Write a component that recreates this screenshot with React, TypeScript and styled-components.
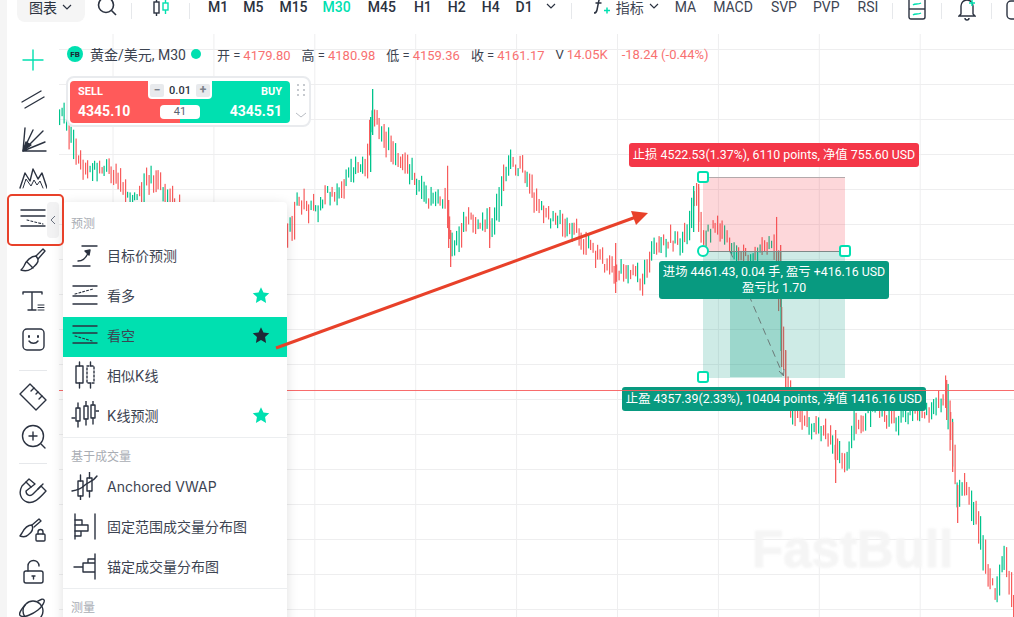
import * as React from 'react';
import styled, { createGlobalStyle } from 'styled-components';

const FONT = `Roboto, "Noto Sans CJK SC", sans-serif`;
const ACCENT = '#00e0b0';
const INK = '#2b3240';
const UP = '#00c48c';
const DOWN = '#f75c5c';

const Global = createGlobalStyle`
  html, body { margin: 0; padding: 0; background: #fff; }
  body { font-family: ${FONT}; color: ${INK}; }
`;

const Page = styled.div`
  position: relative;
  display: flex;
  width: 1014px;
  height: 617px;
  overflow: hidden;
  background: #fff;
`;
const Strip = styled.div`
  width: 7px;
  flex: none;
  background: #f5f5f5;
`;
const Main = styled.div`
  flex: 1;
  display: flex;
  flex-direction: column;
  min-width: 0;
`;
const TopBar = styled.div`
  height: 34px;
  flex: none;
`;
const TopRow = styled.div`
  display: flex;
  align-items: center;
  height: 32px;
  margin-top: -10px;
  padding-left: 10px;
  white-space: nowrap;
`;
const ChartBtn = styled.div`
  width: 68px;
  height: 32px;
  flex: none;
  box-sizing: border-box;
  padding: 2px 0 0 12px;
  display: flex;
  align-items: center;
  gap: 5px;
  background: #f5f5f5;
  border-radius: 8px;
  font-size: 14px;
`;
const TopDivider = styled.div<{ $ml: number }>`
  width: 1px;
  height: 16px;
  flex: none;
  margin: 10px 0 0 ${(p) => p.$ml}px;
  background: #e6e8eb;
`;
const TopIcon = styled.svg<{ $ml: number; $mt?: number }>`
  flex: none;
  margin-left: ${(p) => p.$ml}px;
  margin-top: ${(p) => p.$mt ?? 0}px;
`;
const Period = styled.span<{ $ml: number; $on?: boolean; $light?: boolean }>`
  flex: none;
  margin-left: ${(p) => p.$ml}px;
  padding-top: 2px;
  font-size: 14px;
  font-weight: ${(p) => (p.$light ? 400 : 500)};
  color: ${(p) => (p.$on ? ACCENT : p.$light ? '#3d4452' : INK)};
`;
const Body = styled.div`
  flex: 1;
  display: flex;
  min-height: 0;
`;
const ToolBar = styled.div`
  width: 52px;
  flex: none;
  padding-top: 7px;
  display: flex;
  flex-direction: column;
`;
const ToolSlot = styled.div<{ $h: number }>`
  height: ${(p) => p.$h}px;
  flex: none;
  display: flex;
  align-items: center;
  justify-content: center;
`;
const ToolLine = styled.div`
  width: 28px;
  height: 1px;
  background: #e6e8eb;
`;
const ChartArea = styled.div`
  flex: 1;
  min-width: 0;
  position: relative;
`;
const ChartSvg = styled.svg`
  display: block;
  width: 955px;
  height: 583px;
`;

/* things floating over the chart, in page coordinates */
const Legend = styled.div`
  position: absolute;
  left: 67px;
  top: 45px;
  height: 18px;
  display: flex;
  align-items: center;
  font-size: 13px;
  white-space: nowrap;
  color: #3c4350;
`;
const Badge = styled.div`
  width: 16px;
  height: 16px;
  border-radius: 50%;
  background: ${ACCENT};
  color: #1d2430;
  font-size: 8px;
  font-weight: 700;
  display: flex;
  align-items: center;
  justify-content: center;
`;
const Symbol = styled.span`
  margin-left: 7px;
  font-size: 14px;
`;
const Dot = styled.span`
  width: 10px;
  height: 10px;
  margin: 0 5px 0 5px;
  border-radius: 50%;
  background: ${ACCENT};
`;
const Key = styled.span`
  margin-left: 11px;
  &:first-of-type { margin-left: 0; }
`;
const Val = styled.span`
  color: #f87171;
  margin-left: 3px;
`;
const TradeBox = styled.div`
  position: absolute;
  left: 66px;
  top: 76px;
  width: 245px;
  height: 51px;
  box-sizing: border-box;
  padding: 3px 19px 2px 2px;
  background: #fff;
  border: 2px solid #e9ebee;
  border-radius: 8px;
`;
const TradeInner = styled.div`
  position: relative;
  display: flex;
  height: 42px;
  border-radius: 4px;
  overflow: hidden;
  color: #fff;
  font-weight: 700;
`;
const Side = styled.div<{ $buy?: boolean }>`
  flex: 1;
  display: flex;
  flex-direction: column;
  box-sizing: border-box;
  padding: 3px 8px;
  background: ${(p) => (p.$buy ? ACCENT : '#ff5a5a')};
  align-items: ${(p) => (p.$buy ? 'flex-end' : 'flex-start')};
`;
const SideName = styled.span`
  font-size: 11px;
  line-height: 15px;
`;
const SidePrice = styled.span`
  margin-top: 2px;
  font-size: 14px;
  line-height: 20px;
`;
const Stepper = styled.div`
  position: absolute;
  left: 78px;
  top: 0;
  width: 64px;
  height: 18px;
  box-sizing: border-box;
  padding: 2px;
  display: flex;
  align-items: center;
  justify-content: space-between;
  background: #fff;
  border-radius: 0 0 4px 4px;
  color: #2b3240;
  font-size: 11px;
  font-weight: 500;
`;
const StepBtn = styled.span`
  width: 14px;
  height: 13px;
  background: #e8eaed;
  border-radius: 2px;
  color: #7b818b;
  font-size: 12px;
  font-weight: 700;
  line-height: 13px;
  text-align: center;
`;
const SpreadBox = styled.div`
  position: absolute;
  left: 90px;
  top: 24px;
  width: 40px;
  height: 14px;
  background: #fff;
  border-radius: 4px;
  color: #5b6270;
  font-size: 11px;
  font-weight: 400;
  line-height: 14px;
  text-align: center;
`;
const TradeSide = styled.svg`
  position: absolute;
  right: 2px;
  top: 5px;
`;
const Tag = styled.div<{ $x: number; $y: number; $w: number; $h: number; $bg: string }>`
  position: absolute;
  left: ${(p) => p.$x}px;
  top: ${(p) => p.$y}px;
  width: ${(p) => p.$w}px;
  height: ${(p) => p.$h}px;
  display: flex;
  flex-direction: column;
  align-items: center;
  justify-content: center;
  background: ${(p) => p.$bg};
  border-radius: 3px;
  color: #fff;
  font-size: 12.35px;
  line-height: 16px;
  white-space: nowrap;
`;
const PriceLine = styled.div`
  position: absolute;
  left: 59px;
  right: 0;
  top: 390px;
  height: 1px;
  background: rgba(247, 92, 92, 0.9);
`;
const Handle = styled.div<{ $x: number; $y: number; $round?: boolean }>`
  position: absolute;
  left: ${(p) => p.$x - 6}px;
  top: ${(p) => p.$y - 6}px;
  width: 12px;
  height: 12px;
  box-sizing: border-box;
  background: #fff;
  border: 2px solid ${ACCENT};
  border-radius: ${(p) => (p.$round ? '50%' : '3px')};
`;
const Watermark = styled.div`
  position: absolute;
  left: 752px;
  top: 523px;
  font-family: "Liberation Sans", sans-serif;
  font-size: 51px;
  font-weight: 700;
  line-height: 54px;
  color: #f5f5f5;
  -webkit-text-stroke: 1px #f5f5f5;
  filter: blur(1px);
`;
const Menu = styled.div`
  position: absolute;
  left: 63px;
  top: 202px;
  width: 224px;
  height: 430px;
  background: #fff;
  border-radius: 4px;
  box-shadow: 0 2px 12px rgba(0, 0, 0, 0.13);
`;
const MenuTitle = styled.div<{ $h: number; $pt: number }>`
  height: ${(p) => p.$h}px;
  box-sizing: border-box;
  padding: ${(p) => p.$pt}px 8px 0;
  display: flex;
  align-items: center;
  font-size: 12px;
  color: #a9adb4;
`;
const MenuRow = styled.div<{ $on?: boolean }>`
  height: 40px;
  box-sizing: border-box;
  padding: 0 17px 4px 8px;
  display: flex;
  align-items: center;
  gap: 8px;
  background: ${(p) => (p.$on ? ACCENT : 'transparent')};
  color: #3d4452;
  font-family: Inter, "Noto Sans CJK SC", sans-serif;
  font-size: 14px;
`;
const RowLabel = styled.span`
  flex: 1;
`;
const MenuSep = styled.div`
  height: 1px;
  background: #eceef0;
`;
const ActiveTab = styled.div`
  position: absolute;
  left: 47px;
  top: 202px;
  width: 12px;
  height: 36px;
  display: flex;
  align-items: center;
  justify-content: center;
  background: #f2f2f3;
  border-radius: 4px;
`;
const RedBox = styled.div`
  position: absolute;
  left: 7px;
  top: 194px;
  width: 57px;
  height: 52px;
  box-sizing: border-box;
  border: 2px solid #e8412a;
  border-radius: 5px;
`;
const ArrowLayer = styled.svg`
  position: absolute;
  left: 0;
  top: 0;
  pointer-events: none;
`;

/* price outline read off the picture, bars are scattered around it */
const OUTLINE: [number, number][] = [
  [59, 122], [63, 115], [68, 133], [72, 143], [77, 160], [90, 170], [110, 170], [118, 183], [127, 197], [143, 195],
  [146, 177], [153, 182], [170, 197], [200, 240], [285, 240], [293, 223], [296, 197], [307, 207], [317, 208], [323, 197],
  [333, 193], [347, 180], [357, 167], [367, 163], [372, 120], [380, 127], [390, 147], [397, 163], [403, 160], [410, 173],
  [420, 187], [430, 203], [440, 197], [447, 203], [450, 247], [457, 237], [465, 220], [477, 223], [487, 223], [492, 227],
  [498, 203], [503, 180], [510, 163], [523, 168], [530, 183], [537, 207], [550, 220], [560, 218], [567, 227], [577, 230],
  [583, 240], [593, 253], [603, 263], [617, 273], [627, 273], [642, 280], [653, 253], [667, 240], [680, 243], [688, 230],
  [693, 197], [698, 203], [702, 233], [713, 230], [727, 237], [737, 253], [750, 262], [760, 247], [775, 243], [780, 300],
  [782, 340], [785, 370], [790, 397], [793, 413], [803, 423], [823, 430], [830, 437], [837, 450], [847, 460], [855, 423],
  [873, 410], [897, 420], [913, 407], [927, 413], [940, 400], [946, 395], [950, 430], [955, 477], [958, 497], [963, 483],
  [970, 497], [977, 520], [983, 553], [990, 587], [997, 590], [1003, 557], [1010, 583], [1014, 607],
];
const SPIKES: [number, number, number, string][] = [
  [372, 89, 135, UP], [370, 117, 172, UP], [448, 200, 248, DOWN], [450, 230, 267, DOWN], [489, 207, 248, DOWN],
  [615, 243, 293, DOWN], [780, 245, 307, DOWN], [781, 307, 367, DOWN], [785, 350, 395, DOWN], [835, 430, 483, DOWN],
  [946, 380, 420, DOWN], [950, 412, 440, DOWN], [952, 422, 472, DOWN], [957, 485, 523, DOWN], [693, 186, 232, UP], [698, 184, 222, DOWN],
];

const priceAt = (x: number) => {
  for (let i = 1; i < OUTLINE.length; i++) {
    const [x1, y1] = OUTLINE[i];
    if (x <= x1) {
      const [x0, y0] = OUTLINE[i - 1];
      return y0 + ((y1 - y0) * (x - x0)) / (x1 - x0);
    }
  }
  return 607;
};

const makeBars = () => {
  let seed = 20240;
  const rnd = () => {
    seed = (seed * 16807) % 2147483647;
    return seed / 2147483647;
  };
  const bars: { x: number; y: number; h: number; c: string }[] = [];
  for (let x = 59; x < 1014; x += 2.35) {
    const slope = priceAt(x + 2.35) - priceAt(x);
    const mid = priceAt(x) + (rnd() - 0.5) * 14;
    const h = 5 + rnd() * 14 + Math.abs(slope) * 1.5;
    const falling = slope > 0 ? rnd() < 0.78 : rnd() < 0.3;
    bars.push({ x: Math.round(x * 2) / 2, y: mid - h / 2, h, c: falling ? DOWN : UP });
  }
  return bars;
};

const HLINES = Array.from({ length: 17 }, (_, i) => 49 + i * 35);
const VLINES = Array.from({ length: 9 }, (_, i) => 113 + i * 100.9);

const Chart = () => {
  const bars = React.useMemo(makeBars, []);
  return (
    <ChartSvg viewBox="59 34 955 583">
      {HLINES.map((y) => (
        <line key={y} x1={59} x2={1014} y1={y + 0.5} y2={y + 0.5} stroke="#eeeeef" />
      ))}
      {VLINES.map((x) => (
        <line key={x} x1={x} x2={x} y1={34} y2={617} stroke="#eeeeef" />
      ))}
      {bars.map((b) => (
        <rect key={b.x} x={b.x} y={b.y} width={1.2} height={b.h} fill={b.c} />
      ))}
      {SPIKES.map(([x, y1, y2, c]) => (
        <rect key={`${x}-${y1}`} x={x} y={y1} width={1.3} height={y2 - y1} fill={c} />
      ))}
      <rect x={703} y={177} width={142} height={74} fill="rgba(244,56,72,0.2)" />
      <rect x={703} y={251} width={142} height={127} fill="rgba(8,154,128,0.2)" />
      <rect x={730} y={251} width={52} height={126} fill="rgba(8,154,128,0.25)" />
      <line x1={703} x2={845} y1={177.5} y2={177.5} stroke="#b3a9ab" />
      <line x1={703} x2={845} y1={251.5} y2={251.5} stroke="#7d8a88" />
      <path d="M730 251 L783 375" stroke="#6b7a78" strokeDasharray="7 5" fill="none" />
      <path d="M779 371 L783.5 376 L784 369" stroke="#6b7a78" fill="none" />
    </ChartSvg>
  );
};

const Ico: React.FC<{ box: string; size?: number; children: React.ReactNode }> = ({ box, size = 28, children }) => (
  <svg width={size} height={size} viewBox={box} fill="none" stroke={INK} strokeWidth={1.4} strokeLinecap="round" strokeLinejoin="round" style={{ flex: 'none' }}>
    {children}
  </svg>
);

const Star: React.FC<{ dark?: boolean }> = ({ dark }) => (
  <svg width={18} height={18} viewBox="0 0 24 24" fill={dark ? '#1f2836' : ACCENT}>
    <path d="M12 1.500l3.300 7 7.700 1-5.600 5.300 1.400 7.700-6.800-3.700-6.800 3.700 1.400-7.700L1 9.500l7.700-1z" />
  </svg>
);

const Chevron: React.FC<{ c?: string }> = ({ c = INK }) => (
  <svg width={10} height={10} viewBox="0 0 10 10" fill="none" stroke={c} strokeWidth={1.2}>
    <path d="M1 3l4 4 4-4" />
  </svg>
);

const PERIODS: [string, number, boolean?][] = [
  ['M1', 18], ['M5', 15], ['M15', 16], ['M30', 15, true], ['M45', 17], ['H1', 18], ['H2', 16], ['H4', 16], ['D1', 16],
];
const STUDIES: [string, number][] = [['MA', 16], ['MACD', 17], ['SVP', 18], ['PVP', 16], ['RSI', 18]];

const Top = () => (
  <TopBar>
    <TopRow>
      <ChartBtn>
        图表
        <Chevron />
      </ChartBtn>
      <TopIcon $ml={11} width={22} height={22} viewBox="0 0 22 22" fill="none" stroke={INK} strokeWidth={1.6}>
        <circle cx="10" cy="10" r="7.500" />
        <path d="M15.500 15.500l4.500 4.500" />
      </TopIcon>
      <TopDivider $ml={13} />
      <TopIcon $ml={21} $mt={4} width={16} height={18} viewBox="0 0 16 18" fill="none" stroke={INK} strokeWidth={1.4}>
        <rect x="1" y="3" width="5" height="11" />
        <path d="M3.500 0v3M3.500 14v3" />
        <g stroke={ACCENT}>
          <rect x="10" y="4" width="5" height="7" />
          <path d="M12.500 0v4M12.500 11v4" />
        </g>
      </TopIcon>
      <TopDivider $ml={20} />
      {PERIODS.map(([t, ml, on]) => (
        <Period key={t} $ml={ml} $on={on}>{t}</Period>
      ))}
      <TopIcon $ml={13} width={10} height={10} viewBox="0 0 10 10" fill="none" stroke={INK} strokeWidth={1.2}>
        <path d="M1 3l4 4 4-4" />
      </TopIcon>
      <TopDivider $ml={15} />
      <TopIcon $ml={21} width={17} height={20} viewBox="0 0 17 20" fill="none" stroke={INK} strokeWidth={1.5}>
        <path d="M10 2C7 1.500 6 3 5.600 6L4 14c-.4 2-1.200 3-3 3M2.500 7h6" />
        <path d="M11 14.500h6M14 11.500v6" stroke={ACCENT} />
      </TopIcon>
      <Period $ml={6} $light>指标</Period>
      <TopIcon $ml={5} width={10} height={10} viewBox="0 0 10 10" fill="none" stroke={INK} strokeWidth={1.2}>
        <path d="M1 3l4 4 4-4" />
      </TopIcon>
      {STUDIES.map(([t, ml]) => (
        <Period key={t} $ml={ml} $light>{t}</Period>
      ))}
      <TopDivider $ml={14} />
      <TopIcon $ml={15} $mt={4} width={18} height={26} viewBox="0 0 18 26" fill="none" stroke={INK} strokeWidth={1.4}>
        <rect x="1" y="1" width="16" height="23" rx="2" />
        <path d="M1 14h16" />
        <path d="M5 10c2-2 5 0 8-2M5 20c2-2 5 0 8-2" stroke={ACCENT} />
      </TopIcon>
      <TopDivider $ml={15} />
      <TopIcon $ml={16} $mt={4} width={18} height={26} viewBox="0 0 18 26" fill="none" stroke={INK} strokeWidth={1.4}>
        <path d="M3 19V11a6 6 0 0112 0v8l2 2H1zM7 23a2 2 0 004 0" />
        <path d="M11 8h6M14 5v6" stroke={ACCENT} />
      </TopIcon>
      <TopDivider $ml={15} />
      <TopIcon $ml={14} $mt={4} width={16} height={26} viewBox="0 0 16 26" fill="none" stroke={INK} strokeWidth={1.4}>
        <rect x="1" y="6" width="20" height="18" rx="4" />
      </TopIcon>
    </TopRow>
  </TopBar>
);

const Tools = () => (
  <ToolBar>
    <ToolSlot $h={38}>
      <Ico box="19 46 28 28"><path d="M33 50v20M23 60h20" stroke={ACCENT} /></Ico>
    </ToolSlot>
    <ToolSlot $h={38}>
      <Ico box="19 84 28 28"><path d="M22 102l19-11M25 108l19-11" /></Ico>
    </ToolSlot>
    <ToolSlot $h={46}>
      <Ico box="19 126 28 28">
        <path d="M23 151l2-23M23 151l10-21M23 151l20-20M23 151l22-9M23 151h23" />
        <path d="M23 151l3-9 5 3z" fill={INK} />
      </Ico>
    </ToolSlot>
    <ToolSlot $h={30}>
      <Ico box="19 165 28 28">
        <path d="M20 189l5-15 5 8 3-12 5 10 4-6 5 15" />
        <path d="M23 189l3-9 5 7 3-6 3 5 3-4 3 7" strokeWidth={1} />
      </Ico>
    </ToolSlot>
    <ToolSlot $h={50}>
      <Ico box="19 206 28 28">
        <path d="M21 212h24M21 218h24M21 228h24" />
        <path d="M27 222l16 4" strokeDasharray="2 2" strokeWidth={1.1} />
      </Ico>
    </ToolSlot>
    <ToolSlot $h={38}>
      <Ico box="19 248 28 28">
        <path d="M36 256l7-7 2 2-7 8" />
        <path d="M36 256c-5 0-10 5-12 10-1 2-2 3-3 4 3 1 7 1 10-1 4-3 8-6 7-10z" />
        <path d="M27 262l6 6" />
      </Ico>
    </ToolSlot>
    <ToolSlot $h={38}>
      <Ico box="19 286 28 28">
        <path d="M23 294v-2h19v2M32 292v18M28 310h8" />
        <path d="M38 305h6M38 307.500h6M38 310h6" strokeWidth={1} />
      </Ico>
    </ToolSlot>
    <ToolSlot $h={40}>
      <Ico box="19 325 28 28">
        <rect x="23" y="329" width="21" height="21" rx="4" />
        <path d="M29 336v1M38 336v1" strokeWidth={2} />
        <path d="M29 341c2 3 7 3 9 0" />
      </Ico>
    </ToolSlot>
    <ToolSlot $h={22}><ToolLine /></ToolSlot>
    <ToolSlot $h={32}>
      <Ico box="19 383 28 28">
        <path d="M30 384l16 16-10 10-16-16z" />
        <path d="M34 388l-3 3M38 392l-2 2M42 396l-3 3" />
      </Ico>
    </ToolSlot>
    <ToolSlot $h={48}>
      <Ico box="19 423 28 28">
        <circle cx="33" cy="436" r="10.500" />
        <path d="M29 436h8M33 432v8M41 444l4 4" />
      </Ico>
    </ToolSlot>
    <ToolSlot $h={4}><ToolLine /></ToolSlot>
    <ToolSlot $h={50}>
      <Ico box="19 476 28 28">
        <path d="M29 479l-7 7c-4 7-1 14 5 16 6 2 11-2 19-11l-5-5-8 8c-3 3-7 1-7-3l9-7z" />
        <path d="M26 482l5 5M38 489l5-5" />
      </Ico>
    </ToolSlot>
    <ToolSlot $h={30}>
      <Ico box="19 516 28 28">
        <path d="M32 525l7-6 2 2-7 6" />
        <path d="M32 525c-4 0-8 4-10 8l-2 3c3 1 6 1 8-1 3-2 6-5 4-10z" />
        <rect x="36" y="534" width="9" height="7" rx="1" />
        <path d="M38 534v-2a2.500 2.500 0 015 0v2" />
      </Ico>
    </ToolSlot>
    <ToolSlot $h={52}>
      <Ico box="19 557 28 28">
        <rect x="24" y="571" width="19" height="12" rx="2" />
        <path d="M28 571v-5a5.500 5.500 0 0111 0" />
        <path d="M32 576h3M33.500 576v3" />
      </Ico>
    </ToolSlot>
    <ToolSlot $h={26}>
      <Ico box="19 596 28 28">
        <circle cx="33" cy="611" r="10" />
        <path d="M25 605c-5 6-7 10-4 11 3 2 12-2 17-6 5-4 7-9 6-10-1-2-4 0-6 1" />
      </Ico>
    </ToolSlot>
  </ToolBar>
);

const TradePanel = () => (
  <TradeBox>
    <TradeInner>
      <Side>
        <SideName>SELL</SideName>
        <SidePrice>4345.10</SidePrice>
      </Side>
      <Side $buy>
        <SideName>BUY</SideName>
        <SidePrice>4345.51</SidePrice>
      </Side>
      <Stepper>
        <StepBtn>−</StepBtn>
        0.01
        <StepBtn>+</StepBtn>
      </Stepper>
      <SpreadBox>41</SpreadBox>
    </TradeInner>
    <TradeSide width={12} height={38} viewBox="0 0 12 38" fill="none" stroke="#b9bdc4">
      <path d="M3 1v2M9 1v2M3 6v2M9 6v2M3 11v2M9 11v2" strokeWidth={1.6} />
      <path d="M1 30l5 4 5-4" />
    </TradeSide>
  </TradeBox>
);

const MenuPanel = () => (
  <Menu>
    <MenuTitle $h={35} $pt={6}>预测</MenuTitle>
    <MenuRow>
      <Ico box="71 242 28 28">
        <path d="M82 247h15M73 267h17" />
        <path d="M78 262c5 0 8-3 10-8" />
        <path d="M85 252l5-1-1 5z" fill={INK} />
      </Ico>
      <RowLabel>目标价预测</RowLabel>
    </MenuRow>
    <MenuRow>
      <Ico box="71 283 28 28">
        <path d="M73 288h24M73 298h24M73 306h24" />
        <path d="M75 296l18-5" strokeDasharray="2 2" strokeWidth={1.1} />
      </Ico>
      <RowLabel>看多</RowLabel>
      <Star />
    </MenuRow>
    <MenuRow $on>
      <Ico box="71 323 28 28">
        <path d="M73 328h24M73 335h24M73 345h24" />
        <path d="M75 338l17 5" strokeDasharray="2 2" strokeWidth={1.1} />
      </Ico>
      <RowLabel>看空</RowLabel>
      <Star dark />
    </MenuRow>
    <MenuRow>
      <Ico box="71 363 28 28">
        <rect x="76" y="368" width="7" height="17" />
        <path d="M79.500 364v4M79.500 385v5" />
        <rect x="87" y="368" width="7" height="17" strokeDasharray="2 2" />
        <path d="M90.500 364v4M90.500 385v5" />
      </Ico>
      <RowLabel>相似K线</RowLabel>
    </MenuRow>
    <MenuRow>
      <Ico box="71 403 28 28">
        <path d="M72 420h3M96 413h3" />
        <rect x="76" y="410" width="4" height="13" />
        <path d="M78 405v5M78 423v6" />
        <rect x="84" y="408" width="4" height="13" />
        <path d="M86 403v5M86 421v6" />
        <rect x="91" y="407" width="4" height="13" />
        <path d="M93 402v5M93 420v6" />
      </Ico>
      <RowLabel>K线预测</RowLabel>
      <Star />
    </MenuRow>
    <MenuSep />
    <MenuTitle $h={30} $pt={4}>基于成交量</MenuTitle>
    <MenuRow>
      <Ico box="71 475 28 28">
        <path d="M72 494c6-1 10-3 13-6 3-3 8-3 12-9" />
        <rect x="78" y="484" width="5" height="15" />
        <path d="M80.500 478v6M80.500 499v5" />
        <rect x="87" y="481" width="5" height="13" />
        <path d="M89.500 475v6M89.500 494v6" />
      </Ico>
      <RowLabel>Anchored VWAP</RowLabel>
    </MenuRow>
    <MenuRow>
      <Ico box="71 515 28 28">
        <path d="M75 517v25M95 517v25" />
        <path d="M75 523h7v5h6v6h-7v5h-6M75 528h7M75 534h6" />
      </Ico>
      <RowLabel>固定范围成交量分布图</RowLabel>
    </MenuRow>
    <MenuRow>
      <Ico box="71 555 28 28">
        <path d="M95 557v25M74 570h9M83 566v9h12M83 566h12M88 566v-4h7" />
      </Ico>
      <RowLabel>锚定成交量分布图</RowLabel>
    </MenuRow>
    <MenuSep />
    <MenuTitle $h={34} $pt={0}>测量</MenuTitle>
  </Menu>
);

export default function App() {
  return (
    <Page>
      <Global />
      <Strip />
      <Main>
        <Top />
        <Body>
          <Tools />
          <ChartArea>
            <Chart />
          </ChartArea>
        </Body>
      </Main>

      <Watermark>FastBull</Watermark>
      <Legend>
        <Badge>FB</Badge>
        <Symbol>黄金/美元, M30</Symbol>
        <Dot />
        <Key>开 =<Val>4179.80</Val></Key>
        <Key>高 =<Val>4180.98</Val></Key>
        <Key>低 =<Val>4159.36</Val></Key>
        <Key>收 =<Val>4161.17</Val></Key>
        <Key>V<Val>14.05K</Val></Key>
        <Key><Val>-18.24 (-0.44%)</Val></Key>
      </Legend>
      <TradePanel />

      <Tag $x={629} $y={143} $w={290} $h={24} $bg="#f43748">止损 4522.53(1.37%), 6110 points, 净值 755.60 USD</Tag>
      <Tag $x={659} $y={261} $w={230} $h={38} $bg="#089a80">
        <span>进场 4461.43, 0.04 手, 盈亏 +416.16 USD</span>
        <span>盈亏比 1.70</span>
      </Tag>
      <Tag $x={622} $y={387} $w={304} $h={24} $bg="#089a80">止盈 4357.39(2.33%), 10404 points, 净值 1416.16 USD</Tag>
      <PriceLine />
      <Handle $x={703} $y={177} />
      <Handle $x={703} $y={251} $round />
      <Handle $x={845} $y={251} />
      <Handle $x={703} $y={377} />

      <ActiveTab>
        <svg width={6} height={10} viewBox="0 0 6 10" fill="none" stroke="#6b7280" strokeWidth={1}>
          <path d="M5 1L1 5l4 4" />
        </svg>
      </ActiveTab>
      <MenuPanel />
      <RedBox />
      <ArrowLayer width={1014} height={617} viewBox="0 0 1014 617">
        <path d="M276 348L636 217" stroke="#e8412a" strokeWidth={3} fill="none" />
        <path d="M648 213L631 211L636 225z" fill="#e8412a" />
      </ArrowLayer>
    </Page>
  );
}
